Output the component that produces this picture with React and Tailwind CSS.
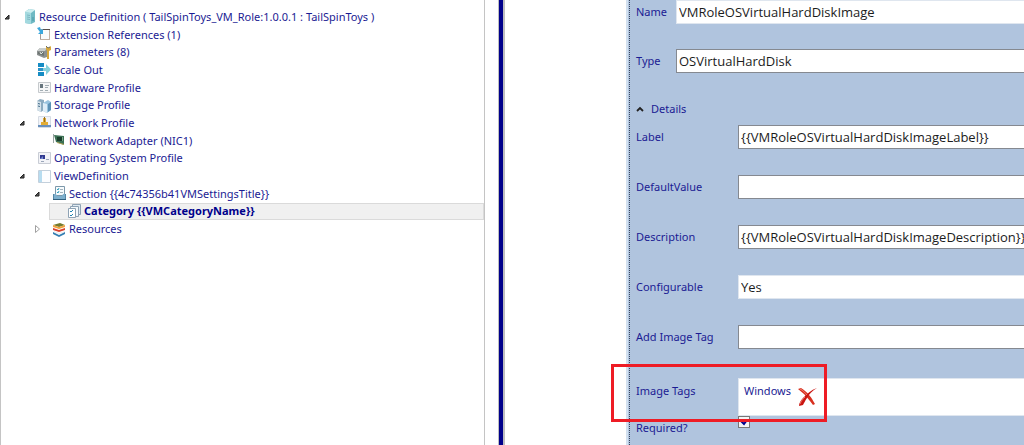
import React from "react";

const icons = {
  server: (
    <>
      <path d="M3 3l4-3 6 1v12l-4 2-6-1z" fill="#6fb9c4" />
      <path d="M3 3l6 1v11l-6-1z" fill="#a3d9df" />
      <path d="M3 3l4-3 6 1-4 3z" fill="#cdeef0" />
      <path d="M5 6l3 .6M5 8l3 .6M5 10l3 .6" stroke="#7fb9c3" fill="none" />
      <path d="M11 8v4" stroke="#4f97a4" />
    </>
  ),
  extension: (
    <>
      <path d="M3.500 2.500h9v10h-9z" fill="#fafafa" stroke="#a39a96" />
      <path d="M6 2.500h7" stroke="#5a4f4c" />
      <path d="M0 1l3-1 1 3 2-1v5H1l2-2z" fill="#3aa6dc" />
      <path d="M12.500 3v9.500H4" stroke="#c2b0a2" fill="none" />
    </>
  ),
  parameters: (
    <>
      <path d="M0 6l3-3h7v9l-3 1-7-3z" fill="#8b9090" />
      <path d="M0 6l3-3h7L8 6z" fill="#c9cdcb" />
      <path d="M1 7h6v4l-6-2z" fill="#6d7472" />
      <path d="M3 7l1 2 2-2" stroke="#dfe6e2" fill="none" />
      <path d="M9 1l2 2 3-2v4l-2 1v8h-2V6L9 4z" fill="#d8a83b" />
      <path d="M9 1l2 2 2-1" stroke="#73705f" fill="none" />
    </>
  ),
  scale: (
    <>
      <path d="M1 1h6v4H1zM1 10h6v4H1z" fill="#168cc4" />
      <path d="M1 6h8V2l5 5.500L9 13V9H1z" fill="#86d0dc" />
      <path d="M1 6h5v3H1z" fill="#2b93c8" />
    </>
  ),
  hardware: (
    <>
      <path d="M1.500 2.500h12v10h-12z" fill="#f5f6f7" stroke="#c5c9cc" />
      <path d="M3 4h3v4H3z" fill="#66757d" />
      <path d="M8 5.500h4M8 7.500h3M3 10.500h3M8 10.500h3" stroke="#a2adb3" />
    </>
  ),
  storage: (
    <>
      <path d="M0 3l3-2 4 1v10l-3 2-4-2z" fill="#8cabc0" />
      <path d="M0 3l4 1v10l-4-2z" fill="#d4e1e9" />
      <path d="M1 5.500l2 .5M1 8l2 .5" stroke="#426b8a" />
      <path d="M6 5l5-3 3 2v8l-4 3-4-2z" fill="#9ac4df" />
      <path d="M6 5l4 1v9l-4-2z" fill="#deedf7" />
      <path d="M11 6l3-2v8l-3 2z" fill="#5b91b5" />
    </>
  ),
  network: (
    <>
      <path d="M1.500 1.500h12v11h-12z" fill="#f1f3f8" stroke="#d6dce4" />
      <path d="M1 10h13v2H1z" fill="#6990bd" />
      <path d="M6 3h3v4h2v3H4V7h2z" fill="#e3ad36" />
      <path d="M7 2h1v5H7z" fill="#8f6d22" />
    </>
  ),
  adapter: (
    <>
      <path d="M2 2l10 1v9L4 9z" fill="#3b7054" />
      <path d="M1.500 1v9" stroke="#9aa5a3" />
      <path d="M5 4h5v4H5z" fill="#193d2b" />
      <path d="M5 9.500l7 2" stroke="#b3a359" />
      <path d="M10.500 4v4" stroke="#78a588" />
    </>
  ),
  os: (
    <>
      <path d="M1.500 1.500h12v11h-12z" fill="#f2f3f7" stroke="#c9cdd5" />
      <path d="M3 4h5v4H3z" fill="#30398f" />
      <path d="M3 8l3-3v3z" fill="#7185cd" />
      <path d="M9 8.500h3M4 10.500h3" stroke="#9ba7ba" />
    </>
  ),
  view: (
    <>
      <path d="M1.500 1.500h12v12h-12z" fill="#fcfdff" stroke="#c3d0dc" />
      <path d="M2 2h3v11H2z" fill="#b7dcf0" />
    </>
  ),
  section: (
    <>
      <path d="M3.500 .500h9v9h-9z" fill="#f7fbfd" stroke="#7d98aa" />
      <path d="M5 3l1 1 1-2M5 6l1 1 1-2" stroke="#319fbd" fill="none" />
      <path d="M8 3.500h3M8 6.500h3" stroke="#a5b4bd" />
      <path d="M1 8h3l1 2h5l1-2h3v6H1z" fill="#7fb0cd" />
      <path d="M1 13.500h13" stroke="#33617f" />
      <path d="M1.500 8v5M13.500 8v5" stroke="#5586a5" />
    </>
  ),
  category: (
    <>
      <path d="M5.500 .500h8v10h-8z" fill="#dfeaf2" stroke="#8fa3b5" />
      <path d="M3.500 2.500h8v10h-8z" fill="#f3f8fb" stroke="#8fa3b5" />
      <path d="M1.500 4.500h7v9h-7z" fill="#fff" stroke="#8fa3b5" />
      <path d="M3 7l1 1 2-2M3 11l1 1 2-2" stroke="#2085b2" fill="none" />
    </>
  ),
  resources: (
    <>
      <path d="M1 3l7-2 5 2-6 2z" fill="#747b2e" />
      <path d="M1 3l6 2 6-2v2L7 7 1 5z" fill="#f0a13a" />
      <path d="M1 6l6 2 6-2v2l-6 2-6-2z" fill="#d9412f" />
      <path d="M2 9l5 2 6-2v1l-6 2-5-2z" fill="#e9ecef" />
      <path d="M1 10l6 3 6-3v2l-6 3-6-3z" fill="#347fb3" />
    </>
  ),
};

const tree = [
  { icon: "server", text: "Resource Definition ( TailSpinToys_VM_Role:1.0.0.1 : TailSpinToys )", pad: "pl-0", open: true },
  { icon: "extension", text: "Extension References (1)", pad: "pl-[15px]" },
  { icon: "parameters", text: "Parameters (8)", pad: "pl-[15px]" },
  { icon: "scale", text: "Scale Out", pad: "pl-[15px]" },
  { icon: "hardware", text: "Hardware Profile", pad: "pl-[15px]" },
  { icon: "storage", text: "Storage Profile", pad: "pl-[15px]" },
  { icon: "network", text: "Network Profile", pad: "pl-[15px]", open: true },
  { icon: "adapter", text: "Network Adapter (NIC1)", pad: "pl-[30px]" },
  { icon: "os", text: "Operating System Profile", pad: "pl-[15px]" },
  { icon: "view", text: "ViewDefinition", pad: "pl-[15px]", open: true },
  { icon: "section", text: "Section {{4c74356b41VMSettingsTitle}}", pad: "pl-[30px]", open: true },
  { icon: "category", text: "Category {{VMCategoryName}}", pad: "pl-[45px]", selected: true },
  { icon: "resources", text: "Resources", pad: "pl-[30px]", open: false },
];

function Toggle({ open, name }) {
  return (
    <button type="button" aria-label={`Toggle ${name}`} aria-expanded={open} className="block">
      <svg width="8" height="8" viewBox="0 0 8 8" className="block">
        {open ? (
          <path d="M6 2v4H2z" fill="#555" stroke="#222" />
        ) : (
          <path d="M2.500 .500l4 3.500-4 3.500z" fill="#fff" stroke="#a0a0a0" />
        )}
      </svg>
    </button>
  );
}

function TreeRow({ node }) {
  return (
    <li className={`flex min-h-0 items-stretch ${node.pad}`}>
      <span className="flex w-[18px] shrink-0 items-center pl-[2px]">
        {node.open !== undefined && <Toggle open={node.open} name={node.text} />}
      </span>
      <span
        className={
          node.selected
            ? "-ml-[15px] flex flex-1 items-center gap-[2px] border border-[#dadada] bg-[#f0f0f0] pl-[17px] font-bold text-[#00008b]"
            : "flex flex-1 items-center gap-[2px] pl-[3px]"
        }
      >
        <svg width="15" height="15" viewBox="0 0 15 15" className="shrink-0" aria-hidden="true">
          {icons[node.icon]}
        </svg>
        <span className="whitespace-nowrap">{node.text}</span>
      </span>
    </li>
  );
}

const fieldBase = "h-6 w-full min-w-0 flex-1 appearance-none rounded-none border border-r-0 bg-white font-['Open_Sans','Noto_Sans',sans-serif] text-[13px] leading-5 text-[#1c1c1c] outline-none";
const boxed = `${fieldBase} border-[#858990] pl-[2px]`;
const plain = `${fieldBase} border-[#dfe6ef] pl-[2px]`;

function DetailRow({ id, label, children }) {
  return (
    <div className="flex items-center">
      <label htmlFor={id} className="w-[102px] shrink-0">{label}</label>
      {children}
    </div>
  );
}

export default function App() {
  return (
    <div className="flex min-h-screen overflow-hidden bg-white font-['Noto_Sans','Open_Sans',sans-serif] text-[11px] leading-4 text-[#1b1b93]">
      <nav aria-label="Resource tree" className="w-[485px] shrink-0 border-x border-[#c4c4c4] pt-2">
        <ul className="grid h-[230px] auto-rows-fr">
          {tree.map((node) => (
            <TreeRow key={node.text} node={node} />
          ))}
        </ul>
      </nav>
      <div className="ml-[13px] w-[7px] shrink-0 border-l border-r-2 border-[#bdbdc0] bg-[#00008b]" />
      <main className="relative ml-[121px] min-w-0 flex-1 border-l-2 border-[#d3e1f0] bg-[#b0c4de]">
        <form className="ml-[1px] min-h-screen border-l border-dotted border-[#38465e] pl-[6px]" onSubmit={(e) => e.preventDefault()}>
          <div className="flex flex-col gap-[25px]">
            <div className="flex items-center">
              <label htmlFor="name" className="w-10 shrink-0">Name</label>
              <input id="name" className={plain} defaultValue="VMRoleOSVirtualHardDiskImage" />
            </div>
            <div className="flex items-center">
              <label htmlFor="type" className="w-10 shrink-0">Type</label>
              <input id="type" className={boxed} defaultValue="OSVirtualHardDisk" />
            </div>
          </div>
          <button type="button" aria-expanded="true" className="mt-7 flex h-4 items-center gap-[7px]">
            <svg width="8" height="6" viewBox="0 0 8 6" aria-hidden="true">
              <path d="M1 5l3-3 3 3" fill="none" stroke="#222" strokeWidth="1.800" />
            </svg>
            Details
          </button>
          <div className="mt-2 flex flex-col gap-[26px]">
            <DetailRow id="label" label="Label">
              <input id="label" className={boxed} defaultValue="{{VMRoleOSVirtualHardDiskImageLabel}}" />
            </DetailRow>
            <DetailRow id="default" label="DefaultValue">
              <input id="default" className={boxed} />
            </DetailRow>
            <DetailRow id="description" label="Description">
              <input id="description" className={boxed} defaultValue="{{VMRoleOSVirtualHardDiskImageDescription}}" />
            </DetailRow>
            <DetailRow id="configurable" label="Configurable">
              <select id="configurable" className={plain} defaultValue="Yes">
                <option>Yes</option>
                <option>No</option>
              </select>
            </DetailRow>
            <DetailRow id="tag" label="Add Image Tag">
              <input id="tag" className={boxed} />
            </DetailRow>
          </div>
          <div className="mt-[29px] flex">
            <span className="w-[102px] shrink-0 pt-[5px]">Image Tags</span>
            <div className="flex h-[38px] flex-1 items-start gap-[6px] border border-r-0 border-[#dfe6ef] bg-white pl-[5px] pt-1">
              <span>Windows</span>
              <button type="button" aria-label="Remove Windows" className="pt-1">
                <svg width="20" height="20" viewBox="0 0 20 20" className="block">
                  <path d="M1 2l3-1c3 2 6 4 8 7 3 3 4 6 6 9l-2 1C13 14 10 10 7 7 5 5 3 4 1 2z" fill="#d8301f" />
                  <path d="M20 1c-5 3-8 6-10 10-2 3-3 5-4 7l-4 1c0-3 2-6 4-8 4-4 8-8 14-10z" fill="#c91410" />
                  <path d="M3 2c3 1 5 4 7 6M3 17c1-3 3-5 5-7" fill="none" stroke="#ee7b6e" />
                </svg>
              </button>
            </div>
          </div>
          <div className="flex">
            <label htmlFor="required" className="w-[102px] shrink-0 pt-1">Required?</label>
            <span className="grid h-3 w-3">
              <input
                id="required"
                type="checkbox"
                defaultChecked
                className="peer col-start-1 row-start-1 h-3 w-3 appearance-none border border-[#777] bg-[#f4f4f4]"
              />
              <svg viewBox="0 0 12 12" className="pointer-events-none invisible col-start-1 row-start-1 h-3 w-3 peer-checked:visible">
                <path d="M3 5l3 3 3-4" fill="none" stroke="#00008b" strokeWidth="2" />
              </svg>
            </span>
          </div>
        </form>
        <div className="pointer-events-none absolute -left-[17px] top-[364px] h-[58px] w-[216px] border-[3px] border-[#ee1c25]" />
      </main>
    </div>
  );
}
